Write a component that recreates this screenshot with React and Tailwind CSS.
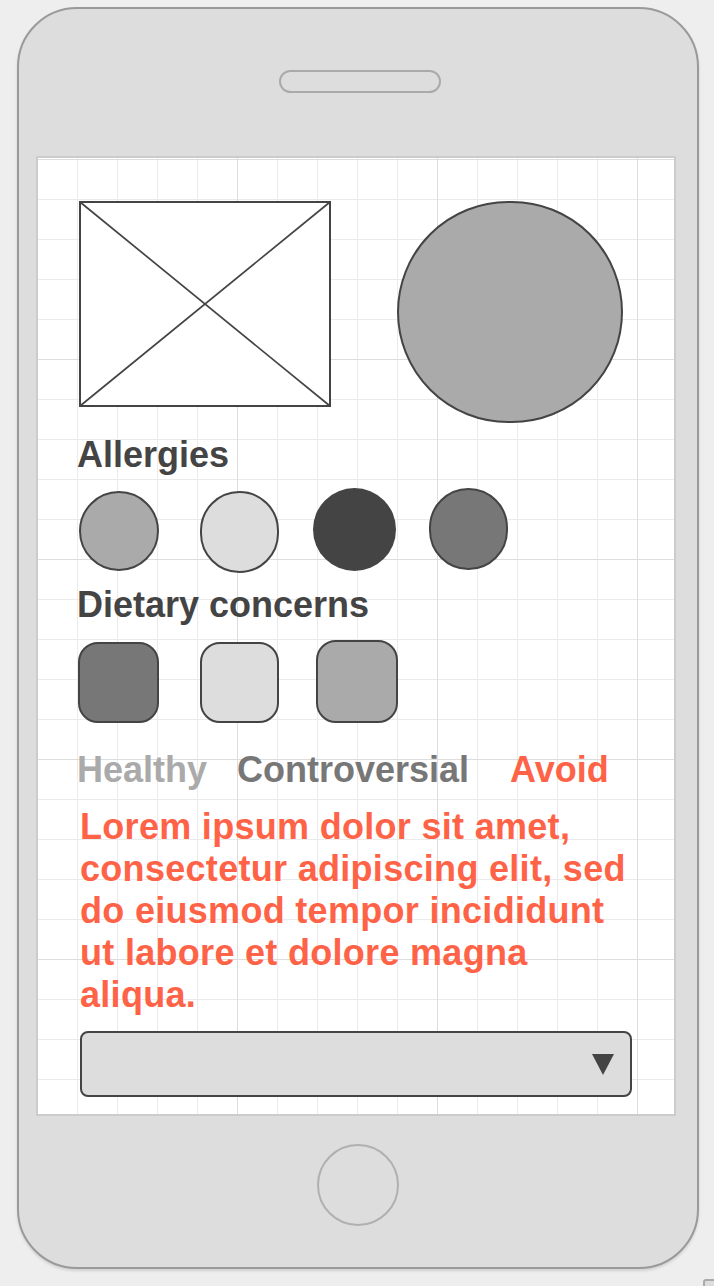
export default function App() {
  return (
    <div className="relative min-h-[1286px] w-full bg-[#eeeeee] pt-[7px] pl-[17px] font-['Liberation_Sans',Arial,sans-serif]">
      <div className="flex h-[1262px] w-[682px] flex-col rounded-[60px] border-2 border-[#9a9a9a] bg-[#dddddd] shadow-[0_2px_3px_rgba(0,0,0,0.12)]">
        {/* speaker */}
        <div className="ml-[260px] mt-[61px] h-[23px] w-[162px] rounded-full border-2 border-[#aaaaaa]" />

        {/* screen */}
        <div className="ml-[17px] mt-[63px] flex h-[960px] w-[640px] flex-col border-2 border-[#cccccc] bg-white pl-[39px] pt-[43px] [background-image:linear-gradient(to_right,#dddddd_1px,transparent_1px),linear-gradient(to_bottom,#dddddd_1px,transparent_1px),linear-gradient(to_right,#ebebeb_1px,transparent_1px),linear-gradient(to_bottom,#ebebeb_1px,transparent_1px)] [background-size:200px_200px,200px_200px,40px_40px,40px_40px] [background-position:-1px_0,0_1px,-1px_0,0_1px]">
          {/* top row */}
          <div className="flex items-start">
            <svg width="252" height="206" className="ml-[2px] shrink-0">
              <rect x="1" y="1" width="250" height="204" fill="#ffffff" stroke="#444444" strokeWidth="2" />
              <line x1="1" y1="1" x2="251" y2="205" stroke="#444444" strokeWidth="1.7" />
              <line x1="251" y1="1" x2="1" y2="205" stroke="#444444" strokeWidth="1.7" />
            </svg>
            <div className="ml-[66px] h-[222px] w-[226px] shrink-0 rounded-full border-2 border-[#444444] bg-[#aaaaaa]" />
          </div>

          <div className="mt-[12px] text-[36px] font-bold leading-[40px] text-[#444444]">Allergies</div>

          <div className="mt-[13px] flex items-start">
            <div className="ml-[2px] mt-[3px] h-[80px] w-[80px] rounded-full border-2 border-[#444444] bg-[#aaaaaa]" />
            <div className="ml-[41px] mt-[3px] h-[82px] w-[79px] rounded-full border-2 border-[#444444] bg-[#dddddd]" />
            <div className="ml-[34px] h-[83px] w-[83px] rounded-full bg-[#444444]" />
            <div className="ml-[33px] h-[82px] w-[79px] rounded-full border-2 border-[#444444] bg-[#777777]" />
          </div>

          <div className="mt-[12px] text-[36px] font-bold leading-[40px] text-[#444444]">Dietary concerns</div>

          <div className="mt-[15px] flex items-start">
            <div className="ml-[1px] mt-[2px] h-[81px] w-[81px] rounded-[20px] border-2 border-[#444444] bg-[#777777]" />
            <div className="ml-[41px] mt-[2px] h-[81px] w-[79px] rounded-[20px] border-2 border-[#444444] bg-[#dddddd]" />
            <div className="ml-[37px] h-[83px] w-[82px] rounded-[20px] border-2 border-[#444444] bg-[#aaaaaa]" />
          </div>

          <div className="mt-[27px] flex whitespace-nowrap text-[36px] font-bold leading-[40px]">
            <span className="w-[160px] shrink-0 text-[#aaaaaa]">Healthy</span>
            <span className="w-[273px] shrink-0 text-[#777777]">Controversial</span>
            <span className="text-[#ff6347]">Avoid</span>
          </div>

          <p className="ml-[3px] mt-[16px] w-[559px] text-[36px] font-bold leading-[42px] tracking-[0.3px] text-[#ff6347]">
            Lorem ipsum dolor sit amet, consectetur adipiscing elit, sed do eiusmod tempor incididunt ut labore et dolore magna aliqua.
          </p>

          <div className="ml-[3px] mt-[15px] flex h-[66px] w-[552px] items-center justify-end rounded-[8px] border-2 border-[#444444] bg-[#dddddd] pr-[16px]">
            <svg width="22" height="21" viewBox="0 0 22 21">
              <polygon points="0,0 22,0 11,21" fill="#444444" />
            </svg>
          </div>
        </div>

        {/* home button */}
        <div className="mx-auto mt-[28px] h-[82px] w-[82px] rounded-full border-2 border-[#b0b0b0]" />
      </div>

      {/* resize handle */}
      <div className="absolute left-[703px] top-[1279px] h-[14px] w-[14px] rounded-[3px] border-2 border-[#aaaaaa] bg-[#dddddd]" />
    </div>
  );
}
